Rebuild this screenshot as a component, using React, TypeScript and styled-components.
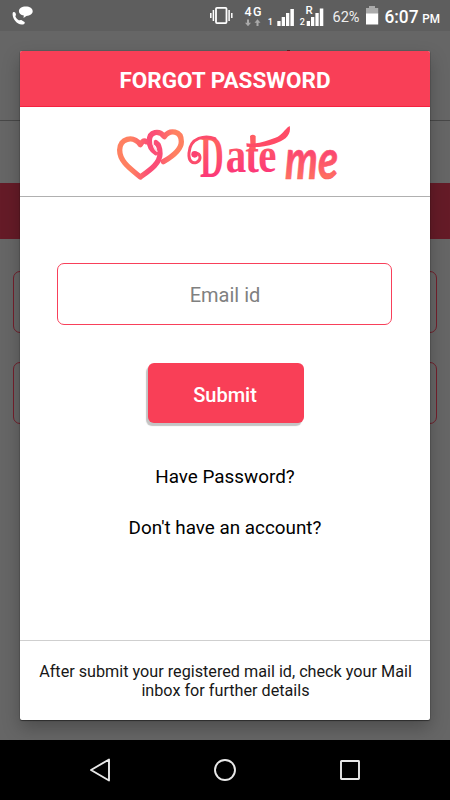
import React from "react";
import styled, { createGlobalStyle } from "styled-components";

const GlobalStyle = createGlobalStyle`
  * { box-sizing: border-box; }
  body { margin: 0; background: #000; font-family: Roboto, "Liberation Sans", sans-serif; }
`;

const Phone = styled.div`
  position: relative;
  width: 450px;
  height: 800px;
  overflow: hidden;
  display: flex;
  flex-direction: column;
  background: #666;
`;

const StatusBar = styled.header`
  flex: none;
  height: 31px;
  background: #5e5e5e;
`;

const StatusIcons = styled.svg`
  display: block;
  font-family: Roboto, sans-serif;
`;

const Page = styled.main`
  flex: 1;
  display: flex;
  flex-direction: column;
`;

const PageTop = styled.div`
  height: 90px;
  padding: 19px 0 0 287px;
  border-bottom: 1px solid #484848;
  &::before {
    content: "";
    display: block;
    width: 3px;
    height: 2px;
    background: #6a2029;
  }
`;

const PageBand = styled.div`
  margin-top: 62px;
  height: 56px;
  background: #651b27;
`;

const PageFields = styled.div`
  display: flex;
  flex-direction: column;
  gap: 29px;
  padding: 32px 13px 0;
`;

const PageField = styled.div`
  height: 62px;
  border: 1px solid #741f2c;
  border-radius: 7px;
`;

const NavBar = styled.nav`
  flex: none;
  position: relative;
  z-index: 2;
  height: 60px;
  background: #000;
  display: flex;
  align-items: center;
  justify-content: space-between;
  padding: 0 88px;
`;

const NavIcon = styled.svg`
  display: block;
  fill: none;
  stroke: #e8e8e8;
  stroke-width: 1.9;
`;

const Dialog = styled.section`
  position: absolute;
  z-index: 1;
  left: 20px;
  top: 51px;
  width: 410px;
  height: 669px;
  display: flex;
  flex-direction: column;
  overflow: hidden;
  background: #fff;
  border-radius: 2px;
`;

const DialogShadow = styled.div`
  position: absolute;
  left: 20px;
  top: 51px;
  width: 410px;
  height: 669px;
  border-radius: 2px;
  box-shadow: 0 0 1px rgba(0, 0, 0, 0.8), 0 1px 1px rgba(0, 0, 0, 0.4), 0 8px 18px rgba(0, 0, 0, 0.25);
`;

const Title = styled.h1`
  margin: 0;
  flex: none;
  height: 56px;
  padding-top: 3px;
  display: flex;
  align-items: center;
  justify-content: center;
  background: #f93f57;
  border-bottom: 1px solid #f5213f;
  color: #fff;
  font-size: 22.5px;
  font-weight: 700;
`;

const LogoRow = styled.div`
  flex: none;
  height: 90px;
  padding-left: 80px;
  border-bottom: 1px solid #b0b0b0;
`;

const LogoArt = styled.svg`
  display: block;
  font-family: "Liberation Serif", serif;
  font-weight: 700;
`;

const Form = styled.form`
  flex: 1;
  display: flex;
  flex-direction: column;
  align-items: center;
  padding-top: 66px;
`;

const EmailField = styled.input`
  width: 335px;
  height: 62px;
  margin-right: 1px;
  padding: 2px 0 0 1px;
  border: 1px solid #f8405a;
  border-radius: 7px;
  outline: 0;
  background: #fff;
  text-align: center;
  font: 400 20px Roboto, sans-serif;
  &::placeholder { color: #808080; opacity: 1; }
`;

const SubmitButton = styled.button`
  width: 156px;
  height: 60px;
  margin: 38px 0 0 2px;
  padding: 4px 2px 0 0;
  border: 0;
  border-radius: 6px;
  background: #f93f57;
  box-shadow: -2px 3px 1px #c4c4c4;
  color: #fff;
  font: 500 20px Roboto, sans-serif;
`;

const FormLink = styled.a<{ $gap: number }>`
  margin-top: ${(p) => p.$gap}px;
  color: #000;
  font-size: 18.85px;
  line-height: 24px;
  white-space: nowrap;
`;

const Note = styled.p`
  flex: none;
  height: 80px;
  margin: 0;
  padding: 22px 9px 0 10px;
  border-top: 1px solid #cfcfcf;
  color: #171717;
  font-size: 16.2px;
  line-height: 18.600px;
  text-align: center;
`;

function Status() {
  return (
    <StatusBar>
      <StatusIcons width="450" height="31" viewBox="0 0 450 31" fill="#fff">
        <path d="M13.2 12.2c1.4-.6 2.3.4 2.7 2 .3 1.3-.8 1.7-.4 2.5.7 1.6 1.8 2.7 3.3 3.5.9.5 1.5-.7 2.5-.1l3.2 1.8c1 .8-.3 2.4-1.7 2.6-5.400.9-10.200-5.500-10.200-10.200 0-1 .1-1.800.6-2.100z" />
        <path d="M25.800 6.600c4 0 6.900 2 6.900 4.700 0 2.500-2.700 4.400-6.300 4.600l-2.900 2.200.3-2.500c-3-.6-4.900-2.200-4.900-4.300 0-2.700 2.900-4.700 6.900-4.700z" />
        <rect x="216" y="7.800" width="10.500" height="15.300" rx="1" fill="none" stroke="#fff" strokeWidth="1.800" />
        <path d="M213.400 10v11M229.100 10v11M210.800 13v5M231.800 13v5" stroke="#fff" strokeWidth="1.500" />
        <text x="244.500" y="16" fontSize="12.500" fontWeight="500" textLength="17">4G</text>
        <g fill="#aaa">
          <path d="M247 19.500h2v3.200h2l-3 3.600-3-3.600h2z" />
          <path d="M256.500 26v-3.200h-2l3-3.600 3 3.600h-2V26z" />
        </g>
        <text x="267.700" y="25" fontSize="9" fontWeight="500">1</text>
        <path d="M277.300 21h3.300v5h-3.300zM281.700 17h3.300v9h-3.300zM286 13h3.300v13H286zM290.400 9h3.500v17h-3.500z" />
        <text x="305.500" y="13.500" fontSize="11.500" fontWeight="500">R</text>
        <text x="299.700" y="25" fontSize="9" fontWeight="500">2</text>
        <path d="M306.700 21h3.300v5h-3.300zM311 17h3.300v9H311zM315.400 13h3.300v13h-3.300zM319.800 8.500h3.500V26h-3.500z" />
        <text x="332.500" y="21.500" fontSize="15.500" textLength="27" lengthAdjust="spacingAndGlyphs" fill="#eee">62%</text>
        <path d="M369 6h6v2h3.200v6h-12.200V8h3z" fill="#aaa" />
        <path d="M366 13.500h12.200v11H366z" />
        <text x="384.500" y="22.500" fontSize="18" fontWeight="500" textLength="34" lengthAdjust="spacingAndGlyphs">6:07</text>
        <text x="422.300" y="22.500" fontSize="12.500" fontWeight="500" textLength="17.700" lengthAdjust="spacingAndGlyphs">PM</text>
      </StatusIcons>
    </StatusBar>
  );
}

function Logo() {
  return (
    <LogoArt width="250" height="89" viewBox="0 -3 750 267" role="img">
      <defs>
        <linearGradient id="heart" gradientUnits="userSpaceOnUse" x1="52" y1="0" x2="188" y2="0">
          <stop offset="0.3" stopColor="#ff8061" />
          <stop offset="0.7" stopColor="#fb4d76" />
        </linearGradient>
        <linearGradient id="heart2" gradientUnits="userSpaceOnUse" x1="142" y1="0" x2="250" y2="0">
          <stop offset="0.2" stopColor="#fb4d76" />
          <stop offset="0.75" stopColor="#ff8061" />
        </linearGradient>
        <linearGradient id="word" gradientUnits="userSpaceOnUse" x1="0" y1="-110" x2="0" y2="0">
          <stop offset="0" stopColor="#ff6260" />
          <stop offset="1" stopColor="#fc3878" />
        </linearGradient>
        <linearGradient id="me" gradientUnits="userSpaceOnUse" x1="0" y1="-84" x2="0" y2="0">
          <stop offset="0" stopColor="#fb4572" />
          <stop offset="1" stopColor="#ff715f" />
        </linearGradient>
      </defs>
      <g fill="none" strokeWidth="16" strokeLinecap="round" strokeLinejoin="round">
        <path d="M190 161C214 147 244 127 244 101C244 68 210 63 193 86C178 66 148 69 148 99C148 119 158 128 168 134" stroke="url(#heart2)" />
        <path d="M139 101C130 95 125 103 121 110C99 81 59 91 59 126C59 161 91 182 121 207C153 184 180 165 180 137C180 120 176 109 168 104" stroke="url(#heart)" />
        <path d="M160 99C158 112 162 122 171 130" stroke="#ffdfe6" strokeWidth="4" />
      </g>
      <g fill="url(#word)">
        <text transform="translate(300 207) scale(.53 1)" fontSize="186">D</text>
        <text transform="translate(377 193) scale(.82 1)" fontSize="150" letterSpacing="-3">ate</text>
      </g>
      <path d="M345 92C316 80 270 88 267 135C265 160 278 168 290 163C304 157 304 136 286 136" fill="none" stroke="#fc4c6c" strokeWidth="9" strokeLinecap="round" />
      <circle cx="284" cy="139" r="10" fill="#fc4070" />
      <path d="M450 84Q458 76 467 84V125H452Z" fill="#ff5d62" />
      <path d="M439 106C466 112 501 97 526 89C548 82 552 64 569 54C575 82 553 98 524 107C496 117 461 119 440 116Z" fill="#ff4b66" />
      <text transform="translate(555 213) scale(.76 1)" fontFamily="Lato, sans-serif" fontSize="164" fontStyle="italic" fill="url(#me)" stroke="#fd5b69" strokeWidth="2">me</text>
    </LogoArt>
  );
}

export default function App() {
  return (
    <>
      <GlobalStyle />
      <Phone>
        <Status />
        <Page>
          <PageTop />
          <PageBand />
          <PageFields>
            <PageField />
            <PageField />
          </PageFields>
        </Page>
        <DialogShadow />
        <Dialog>
          <Title>FORGOT PASSWORD</Title>
          <LogoRow>
            <Logo />
          </LogoRow>
          <Form>
            <EmailField placeholder="Email id" />
            <SubmitButton type="button">Submit</SubmitButton>
            <FormLink $gap={42}>Have Password?</FormLink>
            <FormLink $gap={27}>Don't have an account?</FormLink>
          </Form>
          <Note>
            After submit your registered mail id, check your Mail
            <br />
            inbox for further details
          </Note>
        </Dialog>
        <NavBar>
          <NavIcon width="24" height="26" viewBox="0 0 24 26">
            <path d="M21 2.500v21L3 13z" strokeLinejoin="round" />
          </NavIcon>
          <NavIcon width="24" height="24" viewBox="0 0 24 24">
            <circle cx="12" cy="12" r="10" />
          </NavIcon>
          <NavIcon width="24" height="24" viewBox="0 0 24 24">
            <rect x="3" y="3" width="18" height="18" rx="0.500" />
          </NavIcon>
        </NavBar>
      </Phone>
    </>
  );
}
